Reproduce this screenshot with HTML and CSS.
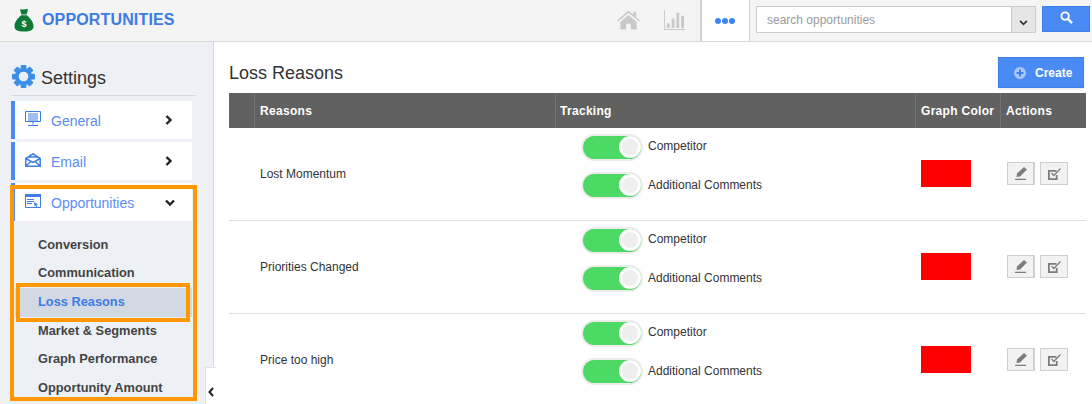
FILE: index.html
```html
<!DOCTYPE html>
<html lang="en">
<head>
<meta charset="utf-8">
<title>Loss Reasons</title>
<link rel="stylesheet" href="styles.css">
</head>
<body>
<header class="topbar">
  <div class="brand">
    <svg class="brand-icon" viewBox="0 0 20 24" width="20" height="24"><path fill="#0e7a3a" d="M6 1c1 .8 2 .2 4 .6 2-.4 3-.8 4-.4L12.600 6.500H7.400ZM7.300 7.300h5.400C16 10 19.500 14 19.500 18c0 4-2.500 5.500-9.500 5.500S.5 22 .5 18C.5 14 4 10 7.300 7.300Z"/><circle cx="10" cy="15.500" r="5" fill="#0e7a3a"/><text x="10" y="19" text-anchor="middle" class="dollar">$</text></svg>
    <span class="brand-name">OPPORTUNITIES</span>
  </div>
  <div class="top-tools">
    <svg class="tool-home" viewBox="0 0 24 20" width="23" height="20"><path fill="#c9c9c9" d="M12 0 0 10.500l1 1L12 2.500l11 9 1-1-4-3.500V1.500h-3v3ZM3.500 12 12 4.800 20.500 12v8H14.500v-6h-5v6H3.500Z"/></svg>
    <svg class="tool-chart" viewBox="0 0 22 21" width="21" height="20"><path fill="#c9c9c9" d="M0 0h1v20h21v1H0ZM3 14h3v5H3ZM8 9h3v10H8ZM13 3h3v16h-3ZM18 6h3v13h-3Z"/></svg>
    <div class="more-tab"><span class="dot"></span><span class="dot"></span><span class="dot"></span></div>
    <div class="search">
      <span class="search-text">search opportunities</span>
      <span class="search-drop"><svg viewBox="0 0 10 7" width="9" height="6"><path fill="none" stroke="#333" stroke-width="2" d="M1 1l4 4 4-4"/></svg></span>
    </div>
    <button class="search-btn"><svg viewBox="0 0 14 14" width="13" height="13"><circle cx="5.500" cy="5.500" r="4" fill="none" stroke="#fff" stroke-width="2"/><path stroke="#fff" stroke-width="2.500" d="M8.500 8.500l4.500 4.500"/></svg></button>
  </div>
</header>
<div class="body">
  <aside class="sidebar">
    <div class="settings-title">
      <svg class="gear" viewBox="0 0 24 24" width="23" height="23"><g fill="#3a8ee6"><rect x="9" y="0" width="6" height="24" rx="1"/><rect x="9" y="0" width="6" height="24" rx="1" transform="rotate(45 12 12)"/><rect x="9" y="0" width="6" height="24" rx="1" transform="rotate(90 12 12)"/><rect x="9" y="0" width="6" height="24" rx="1" transform="rotate(135 12 12)"/></g><circle cx="12" cy="12" r="7" fill="none" stroke="#3a8ee6" stroke-width="4"/><circle cx="12" cy="12" r="5" fill="#edf0f5"/></svg>
      <span class="settings-label">Settings</span>
    </div>
    <nav class="menu">
      <a class="menu-item">
        <svg class="menu-icon" viewBox="0 0 16 16" width="16" height="16"><path fill="none" stroke="#3f7fe8" d="M.5.500h15v10H.5ZM3 3h10M3 5h10M3 7h10M3 9h10M8 10.500v3M3 14.500h10"/></svg>
        <span class="menu-label">General</span>
        <svg class="chev" viewBox="0 0 8 10" width="8" height="10"><path fill="none" stroke="#222" stroke-width="2.400" d="M1.500 1l4 4-4 4"/></svg>
      </a>
      <a class="menu-item">
        <svg class="menu-icon" viewBox="0 0 16 14" width="16" height="14"><path fill="none" stroke="#3f7fe8" stroke-width="1.500" d="M.8 5.500 8 .8l7.200 4.700v7.700H.8ZM.8 5.500 8 9.500l7.200-4M.8 13 6 8.500M15.200 13 10 8.500M4 4h8"/></svg>
        <span class="menu-label">Email</span>
        <svg class="chev" viewBox="0 0 8 10" width="8" height="10"><path fill="none" stroke="#222" stroke-width="2.400" d="M1.500 1l4 4-4 4"/></svg>
      </a>
      <a class="menu-item menu-open">
        <svg class="menu-icon" viewBox="0 0 16 14" width="16" height="14"><path fill="none" stroke="#3f7fe8" d="M.5.500h15v13H.5Z"/><path fill="#3f7fe8" d="M0 0h16v3H0ZM2 5h7v1H2ZM2 7h7v1H2ZM2 9h5v1H2ZM9 8l4 2.500-1.500.5 1 2-1 .5-1-2-1 1Z"/></svg>
        <span class="menu-label">Opportunities</span>
        <svg class="chev-down" viewBox="0 0 10 8" width="10" height="8"><path fill="none" stroke="#222" stroke-width="2.400" d="M1 1.500l4 4 4-4"/></svg>
      </a>
      <ul class="submenu">
        <li>Conversion</li>
        <li>Communication</li>
        <li class="current">Loss Reasons</li>
        <li>Market &amp; Segments</li>
        <li>Graph Performance</li>
        <li>Opportunity Amount</li>
      </ul>
    </nav>
    <div class="mark mark-outer"></div>
    <div class="mark mark-inner"></div>
    <div class="collapse"><svg viewBox="0 0 6 10" width="6" height="10"><path fill="none" stroke="#222" stroke-width="2" d="M5 1 1.500 5 5 9"/></svg></div>
  </aside>
  <main class="content">
    <div class="content-head">
      <h1>Loss Reasons</h1>
      <button class="create"><svg viewBox="0 0 12 12" width="12" height="12"><circle cx="6" cy="6" r="6" fill="#a9c6f7"/><path stroke="#3f7fe8" stroke-width="2" d="M6 2.500v7M2.500 6h7"/></svg><span>Create</span></button>
    </div>
    <div class="table">
      <div class="row head">
        <div class="cell c0"></div><div class="cell c1">Reasons</div><div class="cell c2">Tracking</div><div class="cell c3">Graph Color</div><div class="cell c4">Actions</div>
      </div>
      <div class="row">
        <div class="cell c0"></div>
        <div class="cell c1">Lost Momentum</div>
        <div class="cell c2 toggles">
          <div class="toggle-row"><span class="toggle"><span class="knob"></span></span><span class="toggle-label">Competitor</span></div>
          <div class="toggle-row"><span class="toggle"><span class="knob"></span></span><span class="toggle-label">Additional Comments</span></div>
        </div>
        <div class="cell c3"><span class="swatch"></span></div>
        <div class="cell c4 actions">
          <button class="act act-edit"><svg viewBox="0 0 12 13" width="12" height="13"><path fill="#7d7d7d" d="M9 0l3 2.500L5 9.500l-3.500.5.500-3.500ZM0 11.800h11V13H0Z"/></svg></button>
          <button class="act"><svg viewBox="0 0 13 12" width="13" height="12"><path fill="#7d7d7d" d="M0 2h8.500v1.800H1.800v6.400h6V7h1.800v5H0Z"/><path fill="none" stroke="#7d7d7d" stroke-width="1.200" d="M3.500 5 5.800 7.500 12.500.5"/></svg></button>
        </div>
      </div>
      <div class="row">
        <div class="cell c0"></div>
        <div class="cell c1">Priorities Changed</div>
        <div class="cell c2 toggles">
          <div class="toggle-row"><span class="toggle"><span class="knob"></span></span><span class="toggle-label">Competitor</span></div>
          <div class="toggle-row"><span class="toggle"><span class="knob"></span></span><span class="toggle-label">Additional Comments</span></div>
        </div>
        <div class="cell c3"><span class="swatch"></span></div>
        <div class="cell c4 actions">
          <button class="act act-edit"><svg viewBox="0 0 12 13" width="12" height="13"><path fill="#7d7d7d" d="M9 0l3 2.500L5 9.500l-3.500.5.500-3.500ZM0 11.800h11V13H0Z"/></svg></button>
          <button class="act"><svg viewBox="0 0 13 12" width="13" height="12"><path fill="#7d7d7d" d="M0 2h8.500v1.800H1.800v6.400h6V7h1.800v5H0Z"/><path fill="none" stroke="#7d7d7d" stroke-width="1.200" d="M3.500 5 5.800 7.500 12.500.5"/></svg></button>
        </div>
      </div>
      <div class="row">
        <div class="cell c0"></div>
        <div class="cell c1">Price too high</div>
        <div class="cell c2 toggles">
          <div class="toggle-row"><span class="toggle"><span class="knob"></span></span><span class="toggle-label">Competitor</span></div>
          <div class="toggle-row"><span class="toggle"><span class="knob"></span></span><span class="toggle-label">Additional Comments</span></div>
        </div>
        <div class="cell c3"><span class="swatch"></span></div>
        <div class="cell c4 actions">
          <button class="act act-edit"><svg viewBox="0 0 12 13" width="12" height="13"><path fill="#7d7d7d" d="M9 0l3 2.500L5 9.500l-3.500.5.500-3.500ZM0 11.800h11V13H0Z"/></svg></button>
          <button class="act"><svg viewBox="0 0 13 12" width="13" height="12"><path fill="#7d7d7d" d="M0 2h8.500v1.800H1.800v6.400h6V7h1.800v5H0Z"/><path fill="none" stroke="#7d7d7d" stroke-width="1.200" d="M3.500 5 5.800 7.500 12.500.5"/></svg></button>
        </div>
      </div>
    </div>
  </main>
</div>
</body>
</html>
```
FILE: styles.css
```css
* { box-sizing: border-box; }
html, body { margin: 0; height: 404px; overflow: hidden; }
body { background: #fff; font-family: "Liberation Sans", Arial, sans-serif; color: #333; font-size: 12px; }

.topbar { height: 42px; background: #f4f4f4; border-bottom: 1px solid #d9d9d9; display: flex; justify-content: space-between; }
.brand { display: flex; align-items: center; padding: 0 0 1px 14px; gap: 8px; }
.brand-icon { display: block; }
.dollar { font: bold 9px "Liberation Sans", sans-serif; fill: #fff; }
.brand-name { font-size: 16px; font-weight: 700; color: #3c7be6; letter-spacing: .15px; }

.top-tools { display: flex; align-items: flex-start; }
.tool-home { margin: 10px 0 0 0; }
.tool-chart { margin: 10px 0 0 24px; }
.more-tab { width: 50px; height: 41px; margin-left: 15px; background: #fff; border-left: 2px solid #d2d2d2; border-right: 1px solid #d2d2d2; display: flex; justify-content: center; align-items: center; gap: 1px; padding-right: 1px; }
.dot { width: 6px; height: 6px; border-radius: 50%; background: #3b86f4; }
.search { width: 280px; height: 27px; margin: 6px 0 0 6px; border: 1px solid #cbcbcb; background: #fff; display: flex; justify-content: space-between; align-items: stretch; }
.search-text { color: #9b9b9b; padding: 6px 0 0 10px; font-size: 12px; }
.search-drop { width: 24px; background: #e6e6e6; border-left: 1px solid #cbcbcb; display: flex; justify-content: center; align-items: center; padding-top: 7px; }
.search-btn { width: 48px; height: 26px; margin: 6px 2px 0 6px; border: 1px solid #3f7fe8; background: #4a8af4; padding: 0; }

.body { display: flex; height: 362px; }
.sidebar { position: relative; width: 214px; flex: none; background: #edf0f5; border-right: 1px solid #d9d9d9; padding: 22px 0 0 11px; }
.settings-title { display: flex; align-items: center; gap: 6px; width: 185px; height: 32px; padding-bottom: 6px; font-size: 18px; color: #333; border-bottom: 1px solid #d6d8dc; }
.gear { margin-left: 1px; }
.settings-label { padding-top: 4px; }
.menu { width: 181px; margin-top: 5px; }
.menu-item { display: flex; align-items: center; height: 37.500px; background: #fff; border-left: 4px solid #4a8af4; padding: 0 19px 0 10px; margin-bottom: 3.500px; color: #5b8def; font-size: 14px; }
.menu-icon { margin-top: -2px; }
.menu-label { margin-left: 10px; flex: 1; padding-top: 3px; }
.menu-open { margin-bottom: 0; padding-right: 17px; }
.chev-down { margin-top: 3px; }
.submenu { list-style: none; margin: 0; padding: 10px 0 0 4px; color: #444; font-size: 12.800px; font-weight: 700; }
.submenu li { height: 28.700px; line-height: 28.700px; padding-left: 23px; }
.submenu li.current { background: #d3d9e3; color: #3c7be6; }
.mark { position: absolute; border-style: solid; border-color: #ff9800; pointer-events: none; }
.mark-outer { left: 10px; top: 143px; width: 187px; height: 216px; border-width: 4px; }
.mark-inner { left: 16px; top: 241px; width: 174px; height: 39px; border-width: 4px; }
.collapse { position: absolute; left: 205px; top: 325px; width: 11px; height: 37px; background: #fff; border: 1px solid #e3e3e3; border-right: 0; border-bottom: 0; display: flex; align-items: center; justify-content: center; padding-top: 12px; }

.content { flex: 1; padding: 15px 6px 0 15px; min-width: 0; }
.content-head { display: flex; justify-content: space-between; align-items: flex-start; height: 36px; }
.content-head h1 { margin: 6px 0 0; font-size: 18px; font-weight: 400; color: #333; }
.create { width: 86px; height: 31px; margin-right: 2px; border: 1px solid #3f7fe8; background: #4a8af4; color: #fff; font: 700 12px "Liberation Sans", sans-serif; display: flex; align-items: center; gap: 9px; padding: 0 0 0 15px; box-shadow: 0 1px 2px rgba(0,0,0,.1); }

.table { width: 857px; }
.row { display: flex; height: 93.200px; border-bottom: 1px solid #e0e0e0; }
.row.head { height: 35px; background: #616161; color: #fff; font-weight: 700; font-size: 12px; letter-spacing: .3px; border-bottom: 0; }
.cell { display: flex; align-items: center; padding-left: 5px; border-left: 1px solid transparent; }
.head .cell { border-left-color: #747474; }
.head .cell.c0 { border-left: 0; }
.c0 { width: 25px; }
.c1 { width: 301px; }
.c2 { width: 360px; }
.head .c2 { padding-left: 4px; }
.c3 { width: 85px; }
.c4 { width: 86px; }
.toggles { flex-direction: column; align-items: flex-start; padding: 8px 0 0 27px; gap: 15px; justify-content: flex-start; }
.toggle-row { display: flex; align-items: center; gap: 7px; height: 23px; }
.toggle-label { padding-bottom: 3px; }
.toggle-row + .toggle-row .toggle-label { padding-bottom: 1px; }
.toggle { position: relative; display: block; width: 58px; height: 23px; background: #4cd964; border-radius: 12px; box-shadow: 0 0 0 2px #ececec; }
.knob { position: absolute; right: 0; top: 0; width: 22px; height: 22px; background: #eee; border: 3px solid #fff; border-radius: 50%; }
.swatch { display: block; width: 50px; height: 27px; background: #f00; margin-bottom: 1px; }
.actions { gap: 5px; padding-left: 6px; }
.act { width: 28px; height: 23px; margin-bottom: 1px; background: #f2f2f2; border: 1px solid #cfcfcf; padding: 0; display: flex; align-items: center; justify-content: center; }
.act-edit { border-right-width: 2px; }
```
